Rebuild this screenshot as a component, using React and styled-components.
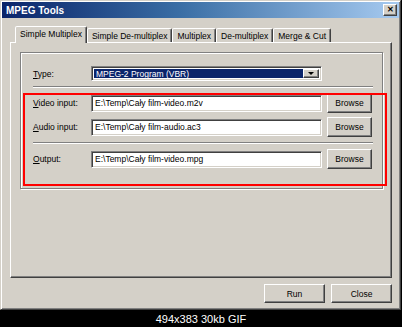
import React from 'react';
import styled, { createGlobalStyle, css } from 'styled-components';

const TABS = ['Simple Multiplex', 'Simple De-multiplex', 'Multiplex', 'De-multiplex', 'Merge & Cut'];

const INPUTS = [
  { key: 'V', rest: 'ideo input:', value: 'E:\\Temp\\Cały film-video.m2v' },
  { key: 'A', rest: 'udio input:', value: 'E:\\Temp\\Cały film-audio.ac3' },
];

const OUTPUT = { key: 'O', rest: 'utput:', value: 'E:\\Temp\\Cały film-video.mpg' };

export default function App() {
  return (
    <>
      <GlobalStyle />
      <Screen>
        <Window>
          <TitleBar>
            <Title>MPEG Tools</Title>
            <CloseBox>✕</CloseBox>
          </TitleBar>

          <Body>
            <TabStrip>
              {TABS.map((t, i) => (
                <Tab key={t} $active={i === 0}>
                  {t}
                </Tab>
              ))}
            </TabStrip>

            <Panel>
              <Frame>
                <Row $h={15}>
                  <Label>
                    <Key>T</Key>ype:
                  </Label>
                  <Combo>
                    <ComboValue>MPEG-2 Program (VBR)</ComboValue>
                    <DropButton>
                      <Arrow />
                    </DropButton>
                  </Combo>
                </Row>

                <Separator />

                <Rows>
                  {INPUTS.map((f) => (
                    <Row key={f.key} $h={20}>
                      <Label>
                        <Key>{f.key}</Key>
                        {f.rest}
                      </Label>
                      <TextBox>{f.value}</TextBox>
                      <Button $w={45} $h={20}>Browse</Button>
                    </Row>
                  ))}
                </Rows>

                <Separator />

                <Row $h={20}>
                  <Label>
                    <Key>{OUTPUT.key}</Key>
                    {OUTPUT.rest}
                  </Label>
                  <TextBox>{OUTPUT.value}</TextBox>
                  <Button $w={45} $h={20}>Browse</Button>
                </Row>
              </Frame>
            </Panel>

            <ButtonRow>
              <Button $w={61} $h={19}>Run</Button>
              <Button $w={61} $h={19}>Close</Button>
            </ButtonRow>
          </Body>

          <Highlight />
        </Window>

        <Caption>494x383 30kb GIF</Caption>
      </Screen>
    </>
  );
}

/* ---------- styles ---------- */

const GlobalStyle = createGlobalStyle`
  html, body {
    margin: 0;
    padding: 0;
    background: #000;
  }
  * {
    box-sizing: border-box;
  }
  body {
    font-family: "Liberation Sans", Arial, sans-serif;
    font-size: 8.5px;
    color: #000;
  }
`;

const raised = css`
  background: #d4d0c8;
  border: 1px solid;
  border-color: #fff #404040 #404040 #fff;
  box-shadow: inset -1px -1px 0 #808080;
`;

const sunken = css`
  border: 1px solid;
  border-color: #808080 #fff #fff #808080;
  box-shadow: inset 1px 1px 0 #404040, inset -1px -1px 0 #d4d0c8;
`;

const Screen = styled.div`
  width: 402px;
  height: 327px;
  background: #000;
  display: flex;
  flex-direction: column;
  overflow: hidden;
`;

const Window = styled.div`
  position: relative;
  width: 401px;
  height: 310px;
  flex: none;
  background: #d4d0c8;
  border: 1px solid;
  border-color: #d4d0c8 #404040 #404040 #d4d0c8;
  box-shadow: inset 1px 1px 0 #fff, inset -1px -1px 0 #808080;
  padding: 1px;
  display: flex;
  flex-direction: column;
`;

const TitleBar = styled.div`
  height: 16px;
  background: linear-gradient(90deg, #0a246a 0%, #3a6ea5 45%, #a6caf0 100%);
  display: flex;
  align-items: center;
  justify-content: space-between;
  padding: 0 2px 0 4px;
`;

const Title = styled.span`
  color: #fff;
  font-weight: bold;
  font-size: 10px;
`;

const CloseBox = styled.div`
  ${raised};
  width: 14px;
  height: 12px;
  display: flex;
  align-items: center;
  justify-content: center;
  font-size: 8px;
  font-weight: bold;
  line-height: 1;
`;

const Body = styled.div`
  flex: 1;
  display: flex;
  flex-direction: column;
  padding: 8px 7px 0 8px;
`;

const TabStrip = styled.div`
  height: 16px;
  display: flex;
  align-items: flex-end;
  padding-left: 5px;
  position: relative;
  z-index: 1;
`;

const Tab = styled.div`
  height: ${({ $active }) => ($active ? '17px' : '14px')};
  margin-bottom: ${({ $active }) => ($active ? '-1px' : '0')};
  padding: 0 4px;
  display: flex;
  align-items: center;
  padding-bottom: ${({ $active }) => ($active ? '2px' : '0')};
  background: #d4d0c8;
  border: 1px solid;
  border-bottom: none;
  border-color: #fff #404040 transparent #fff;
  box-shadow: inset -1px 0 0 #808080;
  border-radius: 2px 2px 0 0;
  white-space: nowrap;
`;

const Panel = styled.div`
  height: 236px;
  background: #d4d0c8;
  border: 1px solid;
  border-color: #fff #404040 #404040 #fff;
  box-shadow: inset -1px -1px 0 #808080;
  padding: 9px 8px 0 9px;
`;

const Frame = styled.div`
  border: 1px solid #808080;
  box-shadow: 1px 1px 0 #fff, inset 1px 1px 0 #fff;
  padding: 13px 9px 19px 12px;
  display: flex;
  flex-direction: column;
`;

const Rows = styled.div`
  display: flex;
  flex-direction: column;
  gap: 4px;
`;

const Row = styled.div`
  height: ${({ $h }) => $h}px;
  display: grid;
  grid-template-columns: 53px 231px 45px;
  column-gap: 5px;
  align-items: center;
`;

const Label = styled.span`
  white-space: nowrap;
`;

const Key = styled.span`
  text-decoration: underline;
`;

const TextBox = styled.div`
  ${sunken};
  height: 17px;
  background: #fff;
  padding: 0 3px;
  display: flex;
  align-items: center;
  white-space: nowrap;
  overflow: hidden;
`;

const Combo = styled.div`
  ${sunken};
  height: 15px;
  background: #fff;
  padding: 2px;
  display: flex;
  align-items: stretch;
`;

const ComboValue = styled.div`
  flex: 1;
  background: #0a246a;
  color: #fff;
  padding: 0 2px;
  display: flex;
  align-items: center;
  white-space: nowrap;
`;

const DropButton = styled.div`
  ${raised};
  width: 16px;
  display: flex;
  align-items: center;
  justify-content: center;
`;

const Arrow = styled.div`
  width: 0;
  height: 0;
  border-left: 3px solid transparent;
  border-right: 3px solid transparent;
  border-top: 3px solid #000;
`;

const Separator = styled.div`
  height: 2px;
  width: 340px;
  margin: 5px 0;
  border-top: 1px solid #808080;
  border-bottom: 1px solid #fff;
`;

const Button = styled.div`
  ${raised};
  width: ${({ $w }) => $w}px;
  height: ${({ $h }) => $h}px;
  display: flex;
  align-items: center;
  justify-content: center;
`;

const ButtonRow = styled.div`
  display: flex;
  justify-content: flex-end;
  gap: 6px;
  margin-top: 6px;
`;

const Highlight = styled.div`
  position: absolute;
  left: 22px;
  top: 92px;
  width: 364px;
  height: 93px;
  border: 2px solid #f00;
  pointer-events: none;
`;

const Caption = styled.div`
  height: 17px;
  display: flex;
  align-items: center;
  justify-content: center;
  color: #fff;
  font-size: 11px;
`;
